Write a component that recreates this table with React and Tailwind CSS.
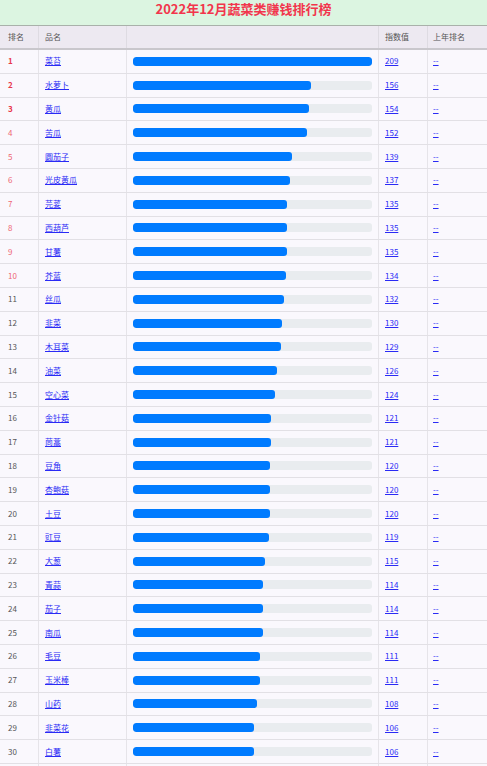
import React from "react";

const rows = [
  ["菜苔", 209], ["水萝卜", 156], ["黄瓜", 154], ["苦瓜", 152], ["圆茄子", 139],
  ["光皮黄瓜", 137], ["芫荽", 135], ["西葫芦", 135], ["甘薯", 135], ["芥蓝", 134],
  ["丝瓜", 132], ["韭菜", 130], ["木耳菜", 129], ["油菜", 126], ["空心菜", 124],
  ["金针菇", 121], ["茼蒿", 121], ["豆角", 120], ["杏鲍菇", 120], ["土豆", 120],
  ["豇豆", 119], ["大葱", 115], ["青蒜", 114], ["茄子", 114], ["南瓜", 114],
  ["毛豆", 111], ["玉米棒", 111], ["山药", 108], ["韭菜花", 106], ["白薯", 106],
];

const max = 209;

function rankClass(i) {
  if (i < 3) return "text-[#e8374a] font-bold";
  if (i < 10) return "text-[#ee6673]";
  return "text-[#555]";
}

export default function App() {
  return (
    <div
      className="w-[487px] h-[766px] overflow-hidden bg-[#faf8fd]"
      style={{ fontFamily: '"Noto Sans CJK SC", "Noto Sans", sans-serif' }}
    >
      {/* title */}
      <div className="h-[26px] bg-[#dcf5e1] border-b border-[#a9b1aa] flex items-center justify-center pb-[8px]">
        <h1 className="text-[13px] font-bold text-[#f2354c] leading-none">
          2022年12月蔬菜类赚钱排行榜
        </h1>
      </div>

      {/* header */}
      <div className="grid grid-cols-[39px_88px_252px_49px_59px] h-[24px] bg-[#ede9f1] border-b-2 border-[#c9c7cc] text-[8px] text-[#555]">
        <div className="flex items-center pl-[8px] border-r border-[#dedbe2]">排名</div>
        <div className="flex items-center pl-[6px] border-r border-[#dedbe2]">品名</div>
        <div className="border-r border-[#dedbe2]"></div>
        <div className="flex items-center pl-[6px] border-r border-[#dedbe2]">指数值</div>
        <div className="flex items-center pl-[5px]">上年排名</div>
      </div>

      {/* rows */}
      {rows.map(([name, val], i) => (
        <div
          key={i}
          className="grid grid-cols-[39px_88px_252px_49px_59px] h-[23.8px] border-b border-[#e2e0e5] text-[8px]"
        >
          <div className={"flex items-center pl-[8px] border-r border-[#e6e4e9] " + rankClass(i)}>
            {i + 1}
          </div>
          <div className="flex items-center pl-[6px] border-r border-[#e6e4e9]">
            <a href="#" className="text-[#2a2af5] underline">{name}</a>
          </div>
          <div className="flex items-center pl-[6px] pr-[6px] border-r border-[#e6e4e9]">
            <div className="w-full h-[9px] rounded-[3px] bg-[#e9ecef] overflow-hidden">
              <div
                className="h-full rounded-[3px] bg-[#007bff]"
                style={{ width: `${(val / max) * 100}%` }}
              />
            </div>
          </div>
          <div className="flex items-center pl-[6px] border-r border-[#e6e4e9]">
            <a href="#" className="text-[#2a2af5] underline">{val}</a>
          </div>
          <div className="flex items-center pl-[5px]">
            <a href="#" className="text-[#2a2af5] underline">--</a>
          </div>
        </div>
      ))}

      {/* next row, cut off by the window */}
      <div className="grid grid-cols-[39px_88px_252px_49px_59px] h-[23.8px]">
        <div className="border-r border-[#e6e4e9]"></div>
        <div className="border-r border-[#e6e4e9]"></div>
        <div className="border-r border-[#e6e4e9]"></div>
        <div className="border-r border-[#e6e4e9]"></div>
        <div></div>
      </div>
    </div>
  );
}
